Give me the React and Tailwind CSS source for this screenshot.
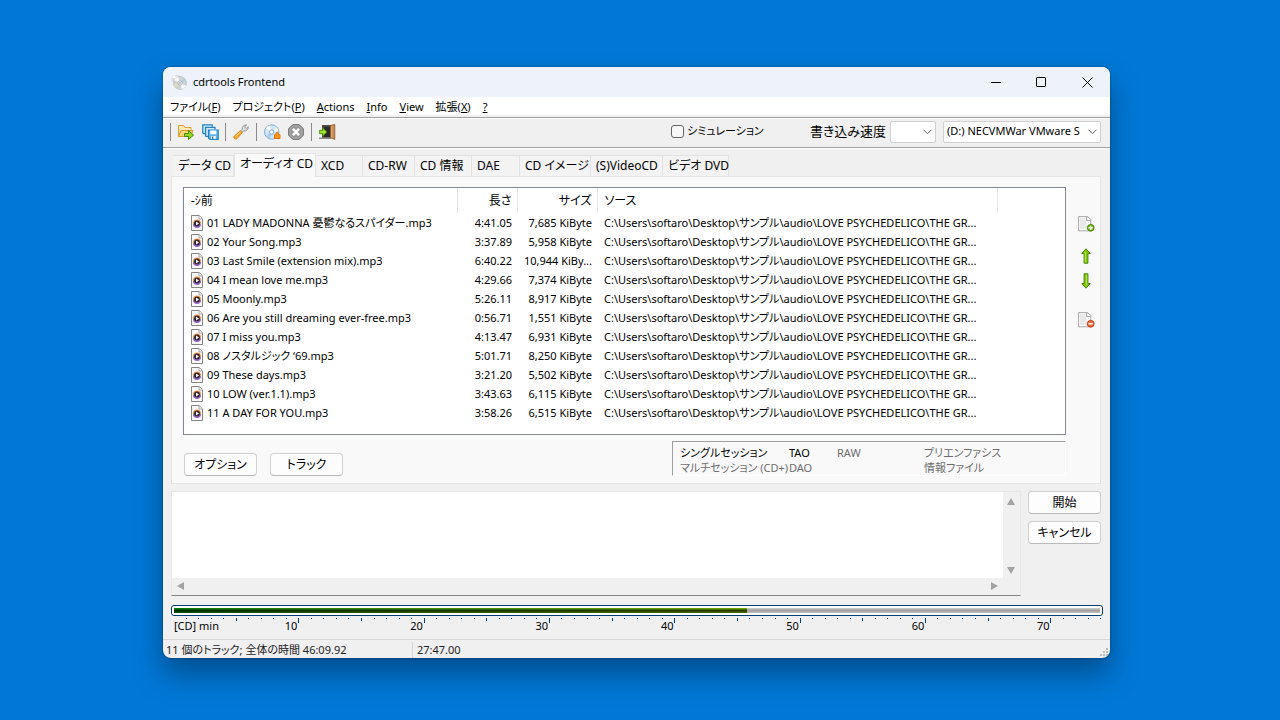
import { useState } from "react";

const MENU = [
  { before: "ファイル(", key: "F", after: ")" },
  { before: "プロジェクト(", key: "P", after: ")" },
  { before: "", key: "A", after: "ctions" },
  { before: "", key: "I", after: "nfo" },
  { before: "", key: "V", after: "iew" },
  { before: "拡張(", key: "X", after: ")" },
  { before: "", key: "?", after: "" },
];

const TABS = [
  { label: "データ CD", width: "w-[61px]" },
  { label: "オーディオ CD", width: "w-[82px]" },
  { label: "XCD", width: "w-[47px]" },
  { label: "CD-RW", width: "w-[52px]" },
  { label: "CD 情報", width: "w-[57px]" },
  { label: "DAE", width: "w-[48px]" },
  { label: "CD イメージ", width: "w-[71px]" },
  { label: "(S)VideoCD", width: "w-[72px]" },
  { label: "ビデオ DVD", width: "w-[66px]" },
];

const SOURCE =
  "C:\\Users\\softaro\\Desktop\\サンプル\\audio\\LOVE PSYCHEDELICO\\THE GR...";

const TRACKS = [
  { name: "01 LADY MADONNA 憂鬱なるスパイダー.mp3", length: "4:41.05", size: "7,685 KiByte" },
  { name: "02 Your Song.mp3", length: "3:37.89", size: "5,958 KiByte" },
  { name: "03 Last Smile (extension mix).mp3", length: "6:40.22", size: "10,944 KiBy..." },
  { name: "04 I mean love me.mp3", length: "4:29.66", size: "7,374 KiByte" },
  { name: "05 Moonly.mp3", length: "5:26.11", size: "8,917 KiByte" },
  { name: "06 Are you still dreaming ever-free.mp3", length: "0:56.71", size: "1,551 KiByte" },
  { name: "07 I miss you.mp3", length: "4:13.47", size: "6,931 KiByte" },
  { name: "08 ノスタルジック ‘69.mp3", length: "5:01.71", size: "8,250 KiByte" },
  { name: "09 These days.mp3", length: "3:21.20", size: "5,502 KiByte" },
  { name: "10 LOW (ver.1.1).mp3", length: "3:43.63", size: "6,115 KiByte" },
  { name: "11 A DAY FOR YOU.mp3", length: "3:58.26", size: "6,515 KiByte" },
];

const DISC_MINUTES = 74;
const USED_MINUTES = 45.8;

/* ---------- icons ---------- */

const DiscIcon = () => (
  <svg width="16" height="16" viewBox="0 0 16 16">
    <ellipse cx="6.5" cy="6" rx="6.4" ry="5" fill="#dde0de" transform="rotate(20 6.5 6)" />
    <path d="M1 3 L7 6.5 L4 1.4z" fill="#fff" />
    <circle cx="9" cy="9" r="6.5" fill="#cfd4d5" stroke="#b4babc" strokeWidth=".6" />
    <path d="M9 9 L3.2 6.2 A6.4 6.4 0 0 1 7 2.8z" fill="#f8f9f9" />
    <path d="M9 9 L14.8 11.8 A6.4 6.4 0 0 1 11 15.2z" fill="#fafbfb" />
    <path d="M9 9 L4.5 13.5 A6.4 6.4 0 0 1 2.8 10.5z" fill="#dedcb0" />
    <path d="M9 9 L12.5 3.7 A6.4 6.4 0 0 1 15 6.8z" fill="#b9cddb" />
    <circle cx="9" cy="9" r="2.2" fill="#eef1f2" stroke="#98a0a3" strokeWidth=".7" />
    <circle cx="9" cy="9" r=".8" fill="#8c9599" />
  </svg>
);

const OpenIcon = () => (
  <svg width="18" height="16" viewBox="0 0 18 16">
    <path d="M1.500 12.500v-11h5l1.500 2h6v3" fill="#fce9b4" stroke="#e0a030" />
    <path d="M1.500 12.500 4 6.500h12l-2.500 6z" fill="#fbd679" stroke="#dc9a2c" />
    <path d="M7.500 9.500h4v-3l5 4.600-5 4.400v-3h-4z" fill="#9ad41c" stroke="#3f8a0c" />
  </svg>
);

const SaveAllIcon = () => (
  <svg width="17" height="16" viewBox="0 0 17 16">
    <path d="M.8 9.500V.8h9.400v2M.8 9.500h3" fill="#d4ecfb" stroke="#2582c4" strokeWidth="1.300" />
    <path d="M3.600 12.400V3.400h9.400v2M3.600 12.400h3" fill="#d4ecfb" stroke="#2582c4" strokeWidth="1.300" />
    <path d="M6.500 6h9.700v9.300H8l-1.500-1.400z" fill="#64b4e8" stroke="#2582c4" strokeWidth="1.200" />
    <path d="M8.300 6.600h6v3.700h-6z" fill="#fff" />
    <path d="M9 12h4.800v3H9z" fill="#e8f4fc" />
    <path d="M10 12.600h1.300V15H10z" fill="#2b6fa8" />
  </svg>
);

const WrenchIcon = () => (
  <svg width="16" height="16" viewBox="0 0 16 16">
    <path d="m8 6.500 1.200-1.200C8.800 3 10.500.8 13.500.9L11.700 3l1.500 1.500L15.300 2.700C15.500 5.500 13 7.500 10.700 6.800L9.400 8.100z" fill="#dedede" stroke="#8d8d8d" strokeWidth=".9" />
    <path d="M7.400 6.700 9.300 8.600 4 14.600C2.500 16.200-.3 13.600 1.300 12z" fill="#fba82e" stroke="#e07b10" strokeWidth=".9" />
    <path d="M7.200 8 2.400 12.700" stroke="#ffd98a" strokeWidth="1" />
  </svg>
);

const BurnIcon = () => (
  <svg width="17" height="16" viewBox="0 0 17 16">
    <circle cx="7.700" cy="8" r="7.200" fill="#d3e6f5" stroke="#78a9d0" strokeWidth=".9" />
    <path d="M7.700 8 2 4.500A6.700 6.700 0 0 1 6 1.500z" fill="#fff" />
    <path d="M7.700 8 12.500 3.300A6.700 6.700 0 0 1 14.300 7z" fill="#f4fbe9" />
    <path d="M7.700 8 2.400 12A6.700 6.700 0 0 0 6 14.500z" fill="#a7cdec" />
    <circle cx="7.700" cy="8" r="2.200" fill="#fff" stroke="#6fa0c9" strokeWidth=".9" />
    <path d="M10.500 14.500v-3.700h1.200c0-3.300 3-3.300 3 0h1.300v3.700z" fill="#fb9a1e" stroke="#e2700a" />
  </svg>
);

const StopIcon = () => (
  <svg width="16" height="16" viewBox="0 0 16 16">
    <path d="M4.800.7h6.400l4.100 4.100v6.400l-4.100 4.100H4.800L.7 11.200V4.800z" fill="#989898" stroke="#686868" />
    <path d="M5.200 1.900h5.600l3.300 3.300v5.600l-3.300 3.300H5.200l-3.300-3.300V5.200z" fill="none" stroke="#b8b8b8" strokeWidth=".7" />
    <path d="m4.900 4.900 6.200 6.200m0-6.200-6.200 6.200" stroke="#fff" strokeWidth="2.600" />
  </svg>
);

const ExitIcon = () => (
  <svg width="17" height="16" viewBox="0 0 17 16">
    <path d="M3 1h9v13H3z" fill="#4b4846" />
    <path d="M5 3h6v10H5z" fill="#2c2a29" />
    <path d="M0 13.500h12V15H0z" fill="#8f8f8f" />
    <path d="M11.500 1.500 15.800.4v15l-4.300-1.600z" fill="#c98b52" stroke="#8a5a2c" strokeWidth=".8" />
    <path d="M12.800 2.500v11" stroke="#e3b37e" strokeWidth="1" />
    <path d="M.6 6.300h3.200V4l4.100 4-4.100 4V9.700H.6z" fill="#a6e22a" stroke="#3f8a0c" strokeWidth=".9" />
  </svg>
);

const MediaFileIcon = () => (
  <svg width="12" height="16" viewBox="0 0 12 16" className="shrink-0">
    <path d="M.5.5h7.700l3.300 3.300v11.700H.5z" fill="#fbfbfb" stroke="#858585" />
    <path d="M8 .5V4h3.500" fill="#eee" stroke="#9b9b9b" strokeWidth=".8" />
    <circle cx="6" cy="8.500" r="4" fill="#f0904a" />
    <path d="M2 9a4 4 0 0 0 8 0z" fill="#9a6ccc" />
    <circle cx="6" cy="8.500" r="2.900" fill="#2d2530" />
    <path d="M5 6.600v3.800l3-1.900z" fill="#fff" />
  </svg>
);

const PageIcon = ({ kind }) => (
  <svg width="17" height="16" viewBox="0 0 17 16">
    <path d="M.6.600h9.200l3 3v11.200H.6z" fill="#fbfbfb" stroke="#a8a8a8" />
    <path d="M2 2h6.500v11H2z" fill="#e9e9e9" />
    <path d="M8.700.8v3.800h4" fill="#fff" stroke="#999" strokeWidth=".9" />
    <circle
      cx="12.700"
      cy="11.800"
      r="3.400"
      fill={kind === "add" ? "#6fb80e" : "#ee6a3c"}
      stroke={kind === "add" ? "#3f8206" : "#bd3510"}
      strokeWidth=".9"
    />
    <path
      d={kind === "add" ? "M10.600 11.800h4.200M12.700 9.700v4.200" : "M10.500 11.800h4.400"}
      stroke="#fff"
      strokeWidth="1.400"
    />
  </svg>
);

const ArrowIcon = ({ down }) => (
  <svg width="10" height="16" viewBox="0 0 10 16" className={down ? "rotate-180" : ""}>
    <path d="M5 .8 9.200 5.500H6.900v9.700H3.100V5.500H.8z" fill="#86c80f" stroke="#45850a" strokeLinejoin="round" />
    <path d="M4.300 4v10.300" stroke="#c3ee58" strokeWidth=".8" />
  </svg>
);

const Chevron = () => (
  <svg
    width="9"
    height="6"
    viewBox="0 0 9 6"
    className="pointer-events-none absolute right-1 top-2"
  >
    <path d="m.5.700 4 4 4-4" fill="none" stroke="#606060" />
  </svg>
);

/* ---------- small parts ---------- */

const Separator = () => <span className="h-[18px] w-px bg-[#8a8a8a]" />;

const ToolButton = ({ label, children }) => (
  <button aria-label={label} className="flex h-5 w-[18px] items-center justify-center">
    {children}
  </button>
);

const PushButton = ({ children }) => (
  <button className="h-[23px] w-[73px] rounded-[4px] border border-[#d0d0d0] border-b-[#b9b9b9] bg-[#fdfdfd] text-center text-xs leading-5">
    {children}
  </button>
);

const ScrollArrow = ({ label, points }) => (
  <button aria-label={label} className="flex size-4 items-center justify-center">
    <svg width="8" height="8" viewBox="0 0 8 8">
      <polygon points={points} fill="#a3a3a3" />
    </svg>
  </button>
);

const TitleBar = () => (
  <header className="flex h-[30px] items-center bg-[#eef3fb] pl-2">
    <DiscIcon />
    <h1 className="ml-[6px] flex-1 text-[11px]">cdrtools Frontend</h1>
    <button aria-label="最小化" className="flex h-full w-[45px] items-center justify-center">
      <span className="h-px w-[10px] bg-black" />
    </button>
    <button aria-label="最大化" className="flex h-full w-[46px] items-center justify-center">
      <span className="size-[10px] rounded-[1px] border border-black" />
    </button>
    <button aria-label="閉じる" className="flex h-full w-[46px] items-center justify-center">
      <svg width="11" height="11" viewBox="0 0 11 11">
        <path d="m.5.500 10 10m0-10-10 10" stroke="#000" />
      </svg>
    </button>
  </header>
);

const MenuBar = () => (
  <nav className="flex h-[18px] items-end gap-3 bg-white px-[7px] text-[11px]">
    {MENU.map((item) => (
      <button key={item.key} className="whitespace-nowrap leading-4">
        {item.before}
        <span className="underline underline-offset-1">{item.key}</span>
        {item.after}
      </button>
    ))}
  </nav>
);

const Toolbar = () => (
  <div className="mt-[2px] flex h-[31px] items-center border-y border-[#a0a0a0] pb-[2px] pl-[7px] pr-[9px] shadow-[0_1px_0_#fff,inset_0_1px_0_#fff]">
    <div className="flex items-center gap-[6px]">
      <Separator />
      <ToolButton label="開く">
        <OpenIcon />
      </ToolButton>
      <ToolButton label="すべて保存">
        <SaveAllIcon />
      </ToolButton>
      <Separator />
      <ToolButton label="設定">
        <WrenchIcon />
      </ToolButton>
      <Separator />
      <ToolButton label="書き込み">
        <BurnIcon />
      </ToolButton>
      <ToolButton label="中止">
        <StopIcon />
      </ToolButton>
      <Separator />
      <ToolButton label="終了">
        <ExitIcon />
      </ToolButton>
    </div>

    <div className="ml-auto flex items-center">
      <label className="flex w-[138px] items-center gap-[3px] whitespace-nowrap text-[11px]">
        <input
          type="checkbox"
          className="size-[13px] appearance-none rounded-[3px] border border-[#666] bg-[#f7f7f7] checked:bg-[#005fb8]"
        />
        シミュレーション
      </label>
      <label htmlFor="speed" className="w-[77px] whitespace-nowrap text-right text-[13px]">
        書き込み速度
      </label>
      <div className="relative ml-1 w-[46px]">
        <select
          id="speed"
          className="block h-[22px] w-full appearance-none rounded-[2px] border border-[#d0d0d0] bg-white pl-1 text-[11px]"
        >
          <option></option>
        </select>
        <Chevron />
      </div>
      <div className="relative ml-[7px] w-[158px]">
        <select
          aria-label="ドライブ"
          className="block h-[22px] w-full appearance-none overflow-hidden rounded-[2px] border border-[#d0d0d0] bg-white pl-[3px] pr-[20px] text-[11px]"
        >
          <option>(D:) NECVMWar VMware S</option>
        </select>
        <Chevron />
      </div>
    </div>
  </div>
);

const TrackTable = () => (
  <div className="h-[248px] flex-1 overflow-hidden border border-[#828790] bg-white">
    <table className="w-full table-fixed border-collapse text-[11px]">
      <colgroup>
        <col className="w-[273px]" />
        <col className="w-[60px]" />
        <col className="w-[80px]" />
        <col className="w-[400px]" />
        <col />
      </colgroup>
      <thead>
        <tr className="h-[25px] text-xs">
          <th className="border-r border-[#e5e5e5] px-[7px] text-left font-normal">-ｼ前</th>
          <th className="border-r border-[#e5e5e5] pr-[5px] text-right font-normal">長さ</th>
          <th className="border-r border-[#e5e5e5] pr-[5px] text-right font-normal">サイズ</th>
          <th className="border-r border-[#e5e5e5] px-[7px] text-left font-normal">ソース</th>
          <td />
        </tr>
      </thead>
      <tbody>
        {TRACKS.map((track) => (
          <tr key={track.name} className="h-[19px] whitespace-nowrap leading-[19px]">
            <td className="p-0 pl-[7px]">
              <div className="flex h-[19px] items-center gap-1">
                <MediaFileIcon />
                <span>{track.name}</span>
              </div>
            </td>
            <td className="p-0 pr-[5px] text-right">{track.length}</td>
            <td className="p-0 pr-[5px] text-right">{track.size}</td>
            <td className="overflow-hidden p-0 pl-[7px]">{SOURCE}</td>
            <td />
          </tr>
        ))}
      </tbody>
    </table>
  </div>
);

const SessionInfo = () => (
  <div className="grid h-[35px] w-[394px] grid-cols-[109px_48px_87px_1fr] content-start whitespace-nowrap border border-[#a0a0a0] border-b-white border-r-white pl-[7px] pt-[3px] text-[11px] leading-[15px] text-[#6d6d6d]">
    <span className="text-black">シングルセッション</span>
    <span className="text-black">TAO</span>
    <span>RAW</span>
    <span>プリエンファシス</span>
    <span>マルチセッション (CD+)</span>
    <span>DAO</span>
    <span />
    <span>情報ファイル</span>
  </div>
);

const Log = () => (
  <div className="flex flex-1 flex-col border border-[#e8e8e8] border-b-[#868686] bg-[#f0f0f0]">
    <div className="flex flex-1">
      <textarea aria-label="ログ" readOnly className="block flex-1 resize-none bg-white outline-none" />
      <div className="flex w-[17px] flex-col justify-between pt-[2px]">
        <ScrollArrow label="上へ" points="4,0 8,7 0,7" />
        <ScrollArrow label="下へ" points="0,1 8,1 4,8" />
      </div>
    </div>
    <div className="flex h-[17px] items-start justify-between pl-[1px] pr-[18px]">
      <ScrollArrow label="左へ" points="0,4 7,0 7,8" />
      <ScrollArrow label="右へ" points="1,0 8,4 1,8" />
    </div>
  </div>
);

const CapacityBar = () => {
  const minutes = Array.from({ length: DISC_MINUTES }, (_, i) => i + 1);

  return (
    <div className="mt-[9px] h-[34px]">
      <div className="h-[11px] rounded-[3px] border border-[#003c74] bg-white px-[2px] py-[2px]">
        <div className="h-[5px] bg-linear-to-b from-[#d0d0d0] via-[#a0a0a0] to-[#c0c0c0]">
          <div
            className="h-full bg-linear-to-r from-[#00900a] to-[#7cc000]"
            style={{ width: `${(USED_MINUTES / DISC_MINUTES) * 100}%` }}
          >
            <div className="h-full bg-linear-to-b from-transparent via-black/70 to-black/40" />
          </div>
        </div>
      </div>
      <div className="mt-[2px] flex h-[5px] pl-[3px] pr-[2px]">
        {minutes.map((m) => (
          <div key={m} className="flex flex-1 items-start justify-end">
            <span
              className={`w-px bg-[#003c74] ${
                m % 10 === 0 ? "h-[5px]" : m % 5 === 0 ? "h-[3px]" : "h-px"
              }`}
            />
          </div>
        ))}
      </div>
      <div className="-mt-1 flex pl-[3px] pr-[2px] text-[11px] leading-[14px]">
        {[10, 20, 30, 40, 50, 60, 70].map((m) => (
          <div key={m} className="flex flex-[10_10_0%] justify-end pr-[2px]">
            {m === 10 && <span className="mr-auto">[CD] min</span>}
            <span>{m}</span>
          </div>
        ))}
        <div className="flex-[4_4_0%]" />
      </div>
    </div>
  );
};

const StatusBar = () => (
  <footer className="flex h-[19px] items-end border-t border-[#d7d7d7] text-[11px] leading-4 text-[#222]">
    <span className="w-[250px] border-r border-[#d7d7d7] pl-[3px]">
      11 個のトラック; 全体の時間 46:09.92
    </span>
    <span className="flex-1 pl-1">27:47.00</span>
    <svg width="8" height="8" viewBox="0 0 8 8" className="mb-[2px] mr-[2px]">
      <path d="M6 0h2v2H6zM3 3h2v2H3zM6 3h2v2H6zM0 6h2v2H0zM3 6h2v2H3zM6 6h2v2H6z" fill="#bdbdbd" />
    </svg>
  </footer>
);

export default function App() {
  const [tab, setTab] = useState(1);

  return (
    <main className="flex min-h-screen bg-[#0078d7] pb-[62px] pl-[163px] pr-[170px] pt-[67px] font-['Noto_Sans','Noto_Sans_CJK_JP',sans-serif] text-black [font-feature-settings:'palt']">
      <section className="flex min-w-0 flex-1 flex-col overflow-hidden rounded-lg bg-[#f0f0f0] shadow-[0_0_2px_rgba(0,0,0,0.5),0_16px_30px_rgba(0,0,0,0.35)]">
        <TitleBar />
        <MenuBar />
        <Toolbar />

        <div className="flex flex-1 flex-col pl-2 pr-[9px] pt-[5px]">
          <div role="tablist" className="flex h-[23px] items-end pl-[2px] text-xs">
            {TABS.map((t, i) => (
              <button
                key={t.label}
                role="tab"
                aria-selected={tab === i}
                onClick={() => setTab(i)}
                className={`shrink-0 whitespace-nowrap border border-b-0 border-[#e3e3e3] pl-[5px] text-left ${t.width} ${
                  tab === i
                    ? "z-10 -mb-px h-6 bg-[#f9f9f9] pb-[3px]"
                    : "h-[21px] border-l-0 bg-[#f3f3f3]"
                }`}
              >
                {t.label}
              </button>
            ))}
          </div>

          <div className="border border-[#e5e5e5] bg-[#f9f9f9] pb-[7px] pl-[11px] pt-[10px]">
            <div className="flex">
              <TrackTable />
              <div className="flex w-[34px] flex-col items-center pl-[6px] pt-[29px]">
                <button aria-label="追加">
                  <PageIcon kind="add" />
                </button>
                <button aria-label="上へ移動" className="mt-4">
                  <ArrowIcon />
                </button>
                <button aria-label="下へ移動" className="mt-[9px]">
                  <ArrowIcon down />
                </button>
                <button aria-label="削除" className="mt-[23px]">
                  <PageIcon kind="remove" />
                </button>
              </div>
            </div>
            <div className="mt-[6px] flex items-end gap-[13px] pl-[1px] pr-[34px]">
              <PushButton>オプション</PushButton>
              <PushButton>トラック</PushButton>
              <div className="ml-auto">
                <SessionInfo />
              </div>
            </div>
          </div>

          <div className="mt-[7px] flex flex-1 gap-[7px]">
            <Log />
            <div className="flex flex-col gap-[7px]">
              <PushButton>開始</PushButton>
              <PushButton>キャンセル</PushButton>
            </div>
          </div>
        </div>

        <div className="pl-2 pr-[7px]">
          <CapacityBar />
        </div>
        <StatusBar />
      </section>
    </main>
  );
}
